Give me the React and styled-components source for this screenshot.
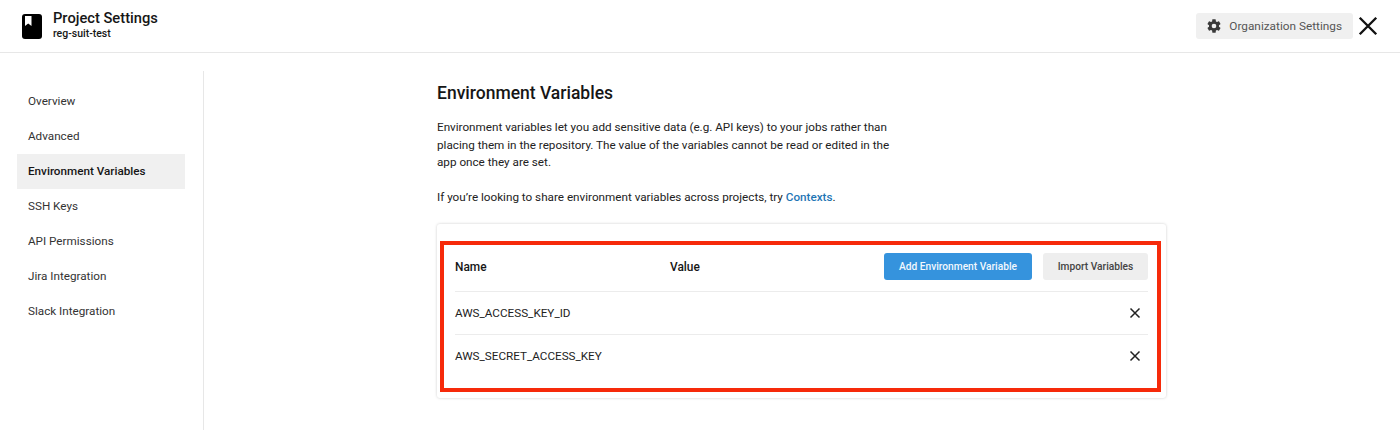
import React from "react";
import styled, { createGlobalStyle } from "styled-components";

const Global = createGlobalStyle`
  html, body { margin: 0; padding: 0; background: #fff; }
  body { font-family: Roboto, "Liberation Sans", sans-serif; color: #161616; overflow: hidden; }
`;

const Page = styled.div`
  width: 1400px;
  height: 430px;
  display: flex;
  flex-direction: column;
`;

const Header = styled.header`
  height: 52px;
  flex: none;
  border-bottom: 1px solid #e7e7e7;
  display: flex;
  align-items: center;
  justify-content: space-between;
  padding: 0 21px 0 22px;
`;

const TitleGroup = styled.div`
  display: flex;
  align-items: center;
  gap: 11px;
`;

const TitleText = styled.div`
  display: flex;
  flex-direction: column;
`;

const ProjectTitle = styled.div`
  font-size: 14.7px;
  font-weight: 500;
  line-height: 17px;
  margin-top: -2px;
`;

const ProjectName = styled.div`
  font-size: 10.5px;
  font-weight: 500;
  line-height: 13px;
`;

const HeaderActions = styled.div`
  display: flex;
  align-items: center;
  gap: 4px;
`;

const OrgButton = styled.button`
  height: 26px;
  border: 0;
  border-radius: 3px;
  background: #f0f0f0;
  color: #555;
  font: 400 11.8px Roboto, sans-serif;
  display: flex;
  align-items: center;
  gap: 7px;
  padding: 0 11px 0 10px;
`;

const IconButton = styled.button`
  border: 0;
  background: none;
  padding: 0;
  display: flex;
  color: #111;
`;

const Body = styled.div`
  flex: 1;
  display: flex;
  min-height: 0;
`;

const Sidebar = styled.nav`
  margin: 18px 0 0 0;
  padding: 13px 18px 0 17px;
  border-right: 1px solid #e7e7e7;
  box-sizing: content-box;
  flex: none;
  width: 168px;
`;

const NavItem = styled.div`
  height: 35px;
  box-sizing: border-box;
  padding: 0 0 2px 11px;
  display: flex;
  align-items: center;
  font-size: 11.7px;
  color: ${(p) => (p.$active ? "#161616" : "#333")};
  font-weight: ${(p) => (p.$active ? 500 : 400)};
  background: ${(p) => (p.$active ? "#f0f0f0" : "transparent")};
`;

const Main = styled.main`
  margin-left: 233px;
  width: 729px;
  padding-top: 30px;
`;

const Heading = styled.h2`
  margin: 0 0 15px;
  font-size: 17.5px;
  font-weight: 500;
  line-height: 21px;
  color: #161616;
`;

const Paragraph = styled.p`
  margin: 0 0 17.5px;
  width: 455px;
  font-size: 11.7px;
  line-height: 17.5px;
  color: #222;
`;

const LinkText = styled.a`
  color: #1f76b5;
  font-weight: 500;
`;

const Card = styled.section`
  height: 174px;
  box-sizing: border-box;
  border-radius: 3px;
  background: #fff;
  box-shadow: 0 0 3px rgba(0, 0, 0, 0.2);
  padding: 17px 5px 6px 3px;
`;

const Frame = styled.div`
  height: 100%;
  box-sizing: border-box;
  border: 4px solid #f62a0a;
  padding: 0 9px 0 11px;
`;

const HeadRow = styled.div`
  height: 47px;
  box-sizing: border-box;
  padding-bottom: 3px;
  display: flex;
  align-items: center;
  border-bottom: 1px solid #ececec;
  font-size: 11.9px;
  font-weight: 500;
`;

const NameCol = styled.div`
  width: 215px;
`;

const ValueCol = styled.div`
  flex: 1;
`;

const ActionButton = styled.button`
  height: 27px;
  border: 0;
  border-radius: 3px;
  font: 500 10.2px Roboto, sans-serif;
  padding: 0;
  width: ${(p) => p.$width}px;
  margin-left: ${(p) => p.$gap || 0}px;
  background: ${(p) => (p.$primary ? "#3593dd" : "#eee")};
  color: ${(p) => (p.$primary ? "#f2f8fd" : "#444")};
`;

const VarRow = styled.div`
  height: 42px;
  display: flex;
  align-items: center;
  justify-content: space-between;
  padding-right: 7px;
  font-size: 11.7px;
  color: #222;
  border-bottom: ${(p) => (p.$last ? "0" : "1px solid #ececec")};
`;

const CloseIcon = ({ size, weight }) => (
  <svg width={size} height={size} viewBox="0 0 24 24" fill="none" stroke="currentColor" strokeWidth={weight}>
    <path d="M3 3 L21 21 M21 3 L3 21" />
  </svg>
);

const BookIcon = () => (
  <svg width="20" height="25" viewBox="0 0 20 25">
    <rect width="20" height="25" rx="3" fill="#000" />
    <path d="M3 2 H9.5 V12 L6.2 9.6 L3 12 Z" fill="#fff" />
  </svg>
);

const GearIcon = () => (
  <svg width="16" height="16" viewBox="0 0 24 24" fill="#3a3a3a">
    <path fillRule="evenodd" d="M19.43 12.98c.04-.32.07-.64.07-.98s-.03-.66-.07-.98l2.11-1.65c.19-.15.24-.42.12-.64l-2-3.46c-.12-.22-.39-.3-.61-.22l-2.49 1c-.52-.4-1.08-.73-1.69-.98l-.38-2.65A.49.49 0 0 0 14 2h-4c-.25 0-.46.18-.49.42l-.38 2.65c-.61.25-1.17.59-1.69.98l-2.49-1a.5.5 0 0 0-.61.22l-2 3.46c-.13.22-.07.49.12.64l2.11 1.65c-.04.32-.07.65-.07.98s.03.66.07.98l-2.11 1.65c-.19.15-.24.42-.12.64l2 3.46c.12.22.39.3.61.22l2.49-1c.52.4 1.08.73 1.69.98l.38 2.65c.03.24.24.42.49.42h4c.25 0 .46-.18.49-.42l.38-2.65c.61-.25 1.17-.59 1.69-.98l2.49 1c.23.09.49 0 .61-.22l2-3.46c.12-.22.07-.49-.12-.64l-2.11-1.65zM12 15.5a3.5 3.5 0 1 1 0-7 3.5 3.5 0 0 1 0 7z" />
  </svg>
);

const navItems = [
  "Overview",
  "Advanced",
  "Environment Variables",
  "SSH Keys",
  "API Permissions",
  "Jira Integration",
  "Slack Integration",
];

export default function App() {
  return (
    <Page>
      <Global />
      <Header>
        <TitleGroup>
          <BookIcon />
          <TitleText>
            <ProjectTitle>Project Settings</ProjectTitle>
            <ProjectName>reg-suit-test</ProjectName>
          </TitleText>
        </TitleGroup>
        <HeaderActions>
          <OrgButton>
            <GearIcon />
            Organization Settings
          </OrgButton>
          <IconButton>
            <CloseIcon size={22} weight={2.6} />
          </IconButton>
        </HeaderActions>
      </Header>
      <Body>
        <Sidebar>
          {navItems.map((item) => (
            <NavItem key={item} $active={item === "Environment Variables"}>
              {item}
            </NavItem>
          ))}
        </Sidebar>
        <Main>
          <Heading>Environment Variables</Heading>
          <Paragraph>
            Environment variables let you add sensitive data (e.g. API keys) to your jobs rather than placing them in the
            repository. The value of the variables cannot be read or edited in the app once they are set.
          </Paragraph>
          <Paragraph>
            If you’re looking to share environment variables across projects, try <LinkText>Contexts</LinkText>.
          </Paragraph>
          <Card>
            <Frame>
              <HeadRow>
                <NameCol>Name</NameCol>
                <ValueCol>Value</ValueCol>
                <ActionButton $primary $width={148}>Add Environment Variable</ActionButton>
                <ActionButton $width={105} $gap={11}>Import Variables</ActionButton>
              </HeadRow>
              <VarRow>
                AWS_ACCESS_KEY_ID
                <CloseIcon size={12} weight={3} />
              </VarRow>
              <VarRow $last>
                AWS_SECRET_ACCESS_KEY
                <CloseIcon size={12} weight={3} />
              </VarRow>
            </Frame>
          </Card>
        </Main>
      </Body>
    </Page>
  );
}
